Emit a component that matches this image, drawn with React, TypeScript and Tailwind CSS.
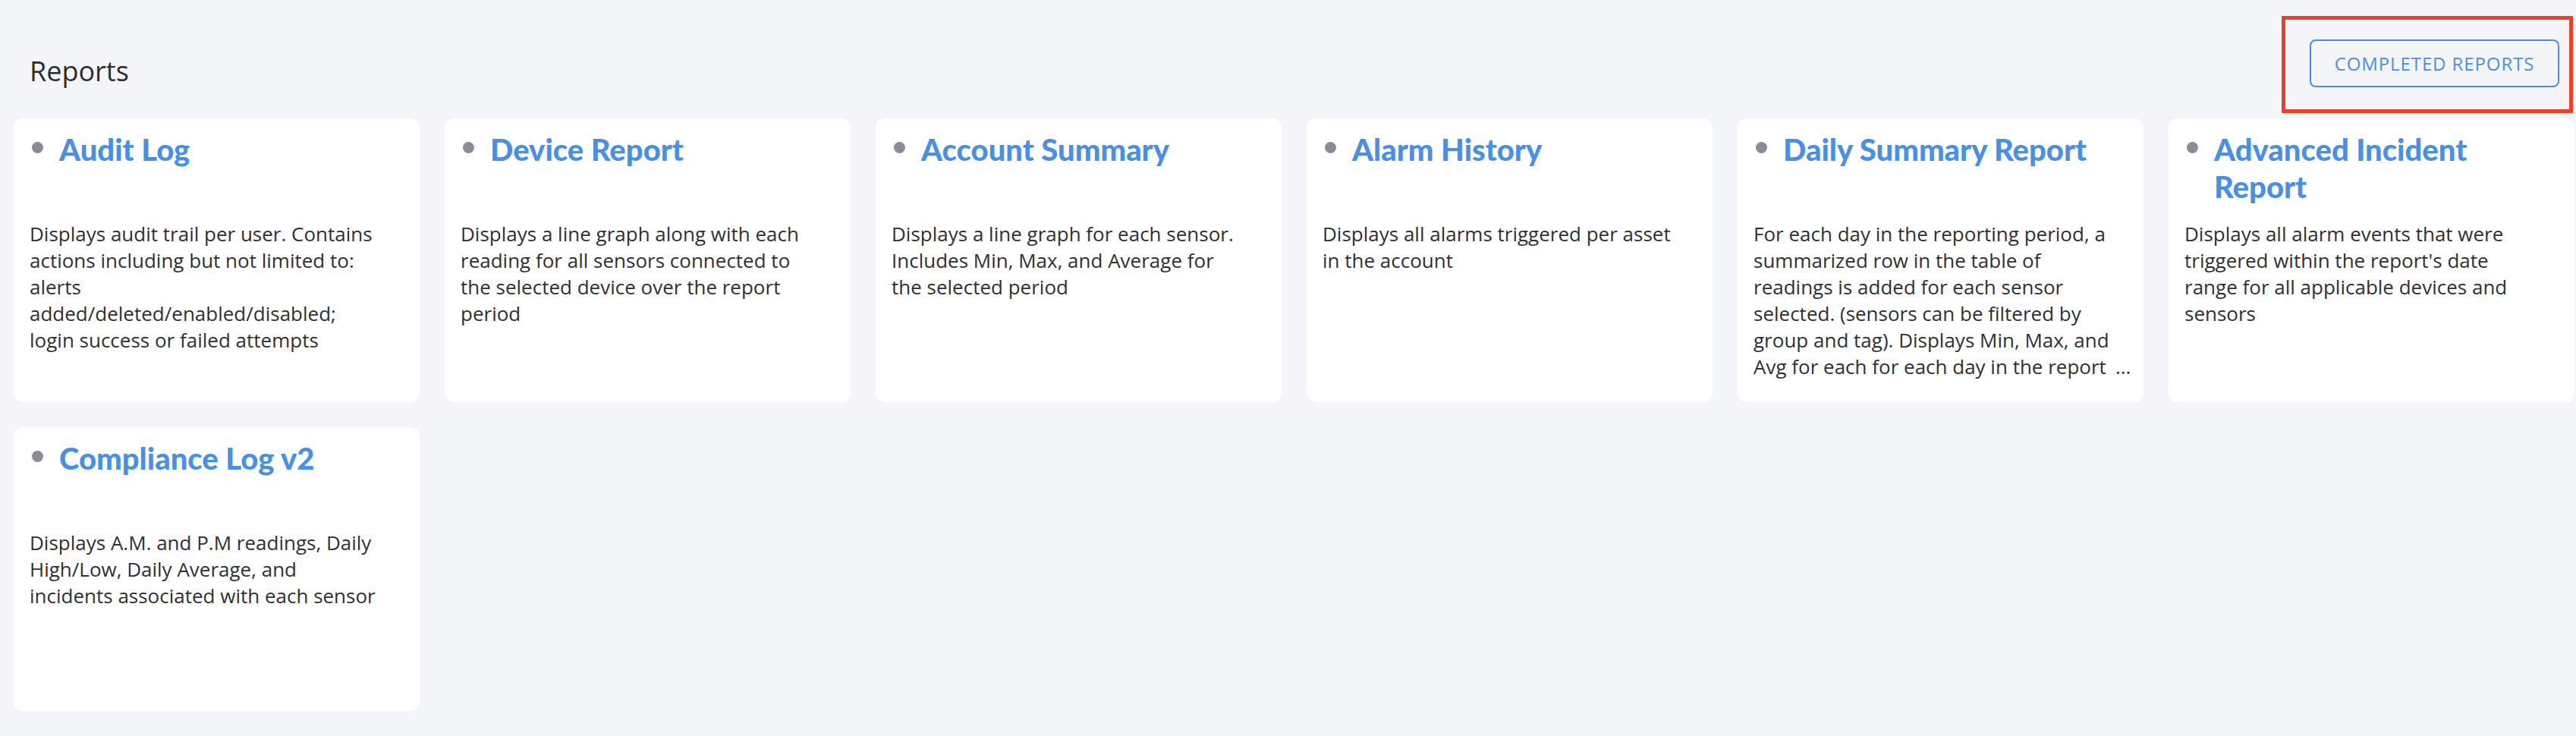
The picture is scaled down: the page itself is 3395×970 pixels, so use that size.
import React from "react";

type Report = { title: string[]; lines: string[]; ellipsis?: boolean };

const reports: Report[] = [
  {
    title: ["Audit Log"],
    lines: [
      "Displays audit trail per user. Contains",
      "actions including but not limited to:",
      "alerts",
      "added/deleted/enabled/disabled;",
      "login success or failed attempts",
    ],
  },
  {
    title: ["Device Report"],
    lines: [
      "Displays a line graph along with each",
      "reading for all sensors connected to",
      "the selected device over the report",
      "period",
    ],
  },
  {
    title: ["Account Summary"],
    lines: [
      "Displays a line graph for each sensor.",
      "Includes Min, Max, and Average for",
      "the selected period",
    ],
  },
  {
    title: ["Alarm History"],
    lines: ["Displays all alarms triggered per asset", "in the account"],
  },
  {
    title: ["Daily Summary Report"],
    lines: [
      "For each day in the reporting period, a",
      "summarized row in the table of",
      "readings is added for each sensor",
      "selected. (sensors can be filtered by",
      "group and tag). Displays Min, Max, and",
      "Avg for each for each day in the report",
    ],
    ellipsis: true,
  },
  {
    title: ["Advanced Incident", "Report"],
    lines: [
      "Displays all alarm events that were",
      "triggered within the report's date",
      "range for all applicable devices and",
      "sensors",
    ],
  },
  {
    title: ["Compliance Log v2"],
    lines: [
      "Displays A.M. and P.M readings, Daily",
      "High/Low, Daily Average, and",
      "incidents associated with each sensor",
    ],
  },
];

function Card({ r }: { r: Report }) {
  return (
    <div className="h-[374px] overflow-hidden rounded-[12px] bg-white px-[21px] pt-[17px]">
      <div className="flex h-[98px] items-start">
        <span className="ml-[3px] mt-[14px] h-[15px] w-[15px] shrink-0 rounded-full bg-[#8a8d97]" />
        <h2 className="ml-[21px] font-['Lato',sans-serif] text-[40px] font-black leading-[49px] text-[#4a90e2]">
          {r.title.map((t) => (
            <span key={t} className="block whitespace-nowrap">
              {t}
            </span>
          ))}
        </h2>
      </div>
      <div className="mt-[20px] font-['Open_Sans',sans-serif] text-[26px] leading-[35px] text-[#2f3033]">
        {r.lines.map((l, i) => (
          <div key={i} className="whitespace-nowrap">
            {l}
            {r.ellipsis && i === r.lines.length - 1 ? (
              <span className="ml-[12px]">...</span>
            ) : null}
          </div>
        ))}
      </div>
    </div>
  );
}

export default function App() {
  return (
    <div className="min-h-[970px] w-[3395px] bg-[#f4f5f9] font-['Open_Sans',sans-serif]">
      <div className="flex h-[156px] items-start justify-between pl-[39px] pr-[22px]">
        <h1 className="mt-[71px] font-['Open_Sans',sans-serif] text-[36px] font-normal leading-[46px] text-[#2d2e31]">
          Reports
        </h1>
        <div className="relative mt-[52px]">
          <button className="flex h-[63px] w-[329px] items-center justify-center rounded-[8px] border-2 border-[#4a90e2] bg-transparent font-['Open_Sans',sans-serif] text-[24px] tracking-[0.9px] text-[#4a90e2]">
            COMPLETED REPORTS
          </button>
          <span className="pointer-events-none absolute -bottom-[34px] -left-[37px] -right-[18px] -top-[31px] border-[5px] border-[#e8432a]" />
        </div>
      </div>
      <div className="grid grid-cols-6 gap-x-[33px] gap-y-[33px] pl-[18px] pr-[2px]">
        {reports.map((r) => (
          <Card key={r.title.join(" ")} r={r} />
        ))}
      </div>
    </div>
  );
}
